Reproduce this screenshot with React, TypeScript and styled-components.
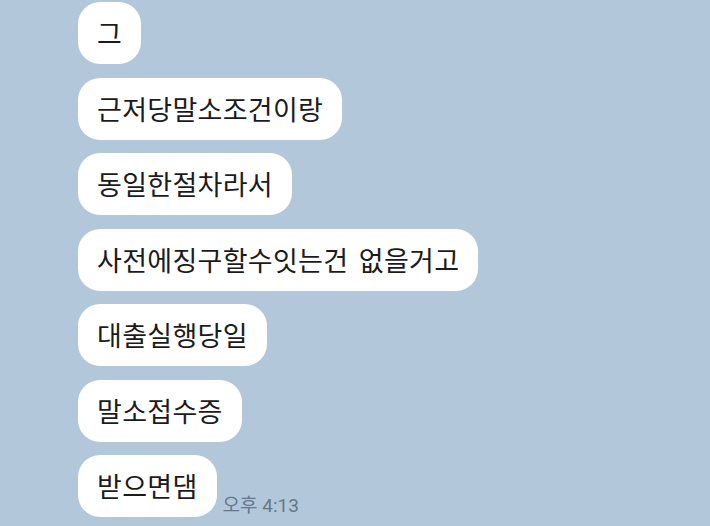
import React from "react";
import styled, { createGlobalStyle } from "styled-components";

const GlobalStyle = createGlobalStyle`
  html, body {
    margin: 0;
    padding: 0;
    background: #b2c7d9;
  }
  body {
    font-family: "Noto Sans CJK KR", "Noto Sans", sans-serif;
  }
`;

const messages = [
  "그",
  "근저당말소조건이랑",
  "동일한절차라서",
  "사전에징구할수잇는건 없을거고",
  "대출실행당일",
  "말소접수증",
  "받으면댐",
];

const App = () => {
  return (
    <>
      <GlobalStyle />
      <ChatArea>
        {messages.map((text, i) => (
          <Row key={i}>
            <Bubble>{text}</Bubble>
            {i === messages.length - 1 && <Time>오후 4:13</Time>}
          </Row>
        ))}
      </ChatArea>
    </>
  );
};

export default App;

const ChatArea = styled.div`
  width: 710px;
  height: 526px;
  box-sizing: border-box;
  padding: 2px 0 0 78px;
  display: flex;
  flex-direction: column;
  gap: 13.5px;
  overflow: hidden;
`;

const Row = styled.div`
  display: flex;
  align-items: flex-end;
  gap: 6px;
`;

const Bubble = styled.div`
  background: #ffffff;
  color: #1b1b1b;
  font-size: 27px;
  line-height: 36px;
  letter-spacing: 0.3px;
  word-spacing: 4px;
  padding: 13px 19px;
  border-radius: 22px;
  white-space: nowrap;
`;

const Time = styled.span`
  color: #66778a;
  font-family: Roboto, "Noto Sans CJK KR", sans-serif;
  font-size: 19px;
  font-weight: 400;
  line-height: 22px;
  white-space: nowrap;
`;
